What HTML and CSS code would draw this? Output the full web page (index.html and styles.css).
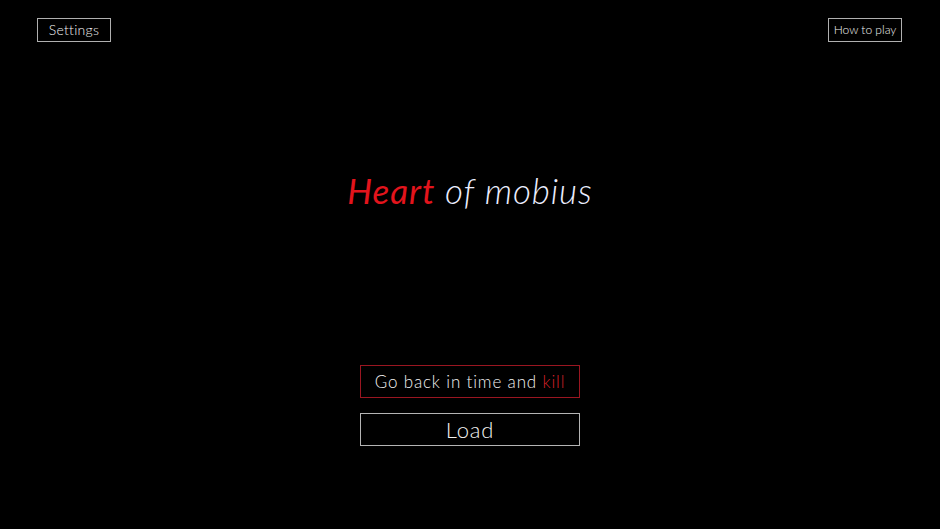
FILE: index.html
```html
<!DOCTYPE html>
<html>
<head>
<meta charset="utf-8">
<link rel="stylesheet" href="styles.css">
</head>
<body>
<div class="screen">
  <div class="topbar">
    <button class="small-btn settings">Settings</button>
    <button class="small-btn howto">How to play</button>
  </div>
  <h1 class="title"><span class="heart">Heart</span> <span class="rest">of mobius</span></h1>
  <div class="menu">
    <button class="menu-btn start">Go back in time and <span class="kill">kill</span></button>
    <button class="menu-btn load">Load</button>
  </div>
</div>
</body>
</html>
```
FILE: styles.css
```css
html, body {
  margin: 0;
  padding: 0;
  background: #000;
}
.screen {
  width: 940px;
  height: 529px;
  display: flex;
  flex-direction: column;
  font-family: Lato, "Open Sans", sans-serif;
  font-weight: 300;
  color: #f2f2f2;
}
.topbar {
  display: flex;
  justify-content: space-between;
  padding: 18px 38px 0 37px;
}
button {
  font-family: inherit;
  font-weight: 300;
  background: transparent;
  color: #f2f2f2;
  margin: 0;
  cursor: pointer;
}
.small-btn {
  width: 74px;
  height: 24px;
  border: 1px solid #b0b0b0;
  padding: 0;
  line-height: 22px;
}
.settings {
  font-size: 14px;
  letter-spacing: 0.3px;
}
.howto {
  font-size: 12px;
}
.title {
  margin: 124px 0 0 0;
  text-align: center;
  font-size: 35px;
  font-style: italic;
  font-weight: 300;
  line-height: 48px;
  letter-spacing: 0.9px;
}
.heart {
  color: #e3141c;
  font-weight: 400;
}
.rest {
  color: #eceeff;
}
.menu {
  margin-top: 151px;
  display: flex;
  flex-direction: column;
  align-items: center;
  gap: 15px;
}
.menu-btn {
  width: 220px;
  height: 33px;
  padding: 0;
}
.start {
  border: 1px solid #9a1621;
  font-size: 17px;
  letter-spacing: 0.85px;
}
.kill {
  color: #d8202a;
}
.load {
  border: 1px solid #b4b4b4;
  font-size: 22px;
  letter-spacing: 0.8px;
}
```
